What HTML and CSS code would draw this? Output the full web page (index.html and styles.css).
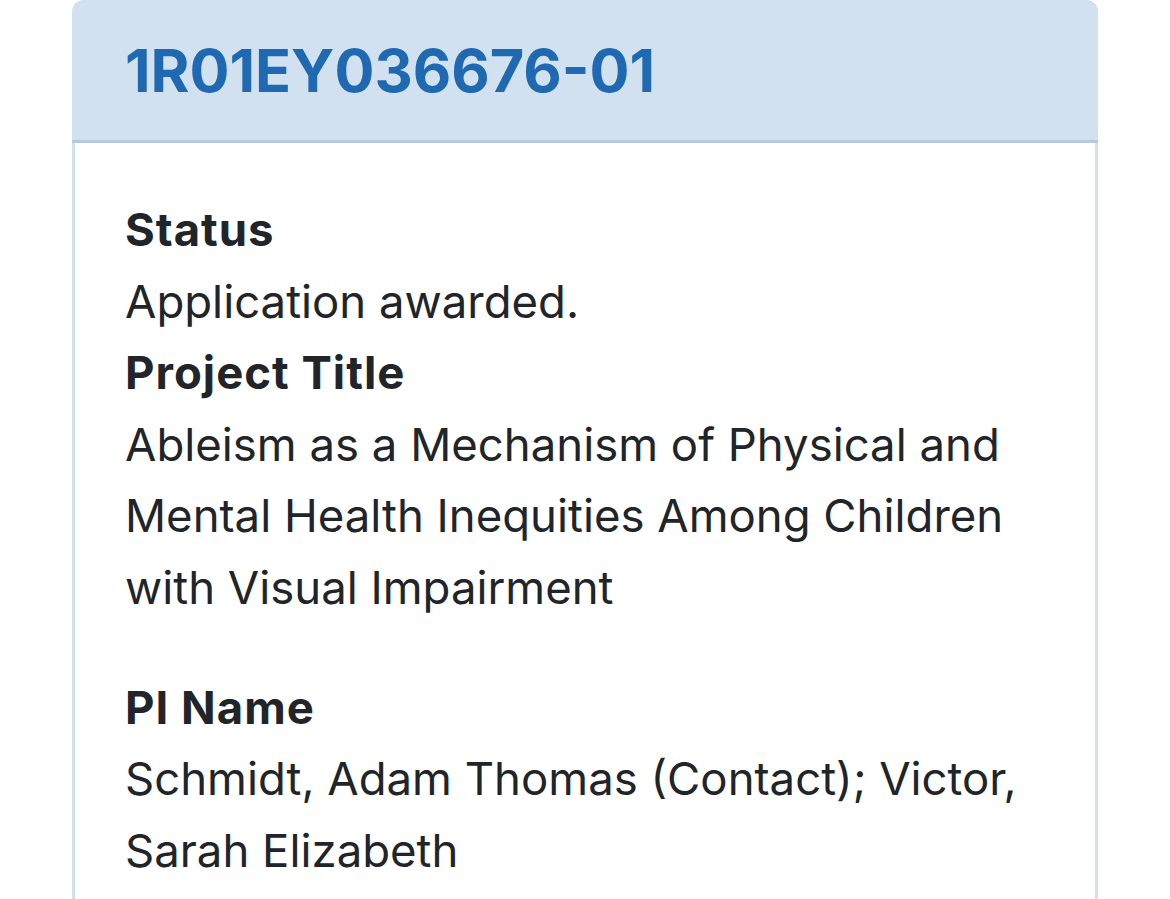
FILE: index.html
```html
<!DOCTYPE html>
<html>
<head>
<meta charset="utf-8">
<link rel="stylesheet" href="styles.css">
</head>
<body>
<div class="card">
  <div class="card-header">
    <h1 class="grant-id">1R01EY036676-01</h1>
  </div>
  <div class="card-body">
    <dl class="fields">
      <dt>Status</dt>
      <dd>Application awarded.</dd>
      <dt>Project Title</dt>
      <dd class="spaced">Ableism as a Mechanism of Physical and Mental Health Inequities Among Children with Visual Impairment</dd>
      <dt>PI Name</dt>
      <dd>Schmidt, Adam Thomas (Contact); Victor, Sarah Elizabeth</dd>
    </dl>
  </div>
</div>
</body>
</html>
```

FILE: styles.css
```css
html, body {
  margin: 0;
  padding: 0;
  background: #ffffff;
}
body {
  font-family: Inter, "Noto Sans", "Liberation Sans", sans-serif;
  color: #212529;
  padding: 0 72px;
  height: 899px;
  overflow: hidden;
}
.card {
  width: 1026px;
  box-sizing: border-box;
  border: 3px solid #d1e1f0;
  border-top: none;
  border-radius: 12px 12px 0 0;
  min-height: 920px;
}
.card-header {
  background: #d1e1f0;
  height: 143px;
  box-sizing: border-box;
  border-bottom: 3px solid #b8c9d9;
  margin: 0 -3px;
  border-radius: 12px 12px 0 0;
  display: flex;
  align-items: center;
  padding-left: 53px;
}
.grant-id {
  margin: 0;
  font-size: 59.3px;
  font-weight: 700;
  color: #1e69b2;
}
.card-body {
  padding: 51px 50px 0 50px;
}
.fields {
  margin: 0;
  font-size: 45.5px;
  line-height: 71.6px;
}
.fields dt {
  font-weight: 700;
  letter-spacing: 1px;
}
.fields dd {
  margin: 0;
}
.fields dd.spaced {
  margin-bottom: 48px;
}
```
